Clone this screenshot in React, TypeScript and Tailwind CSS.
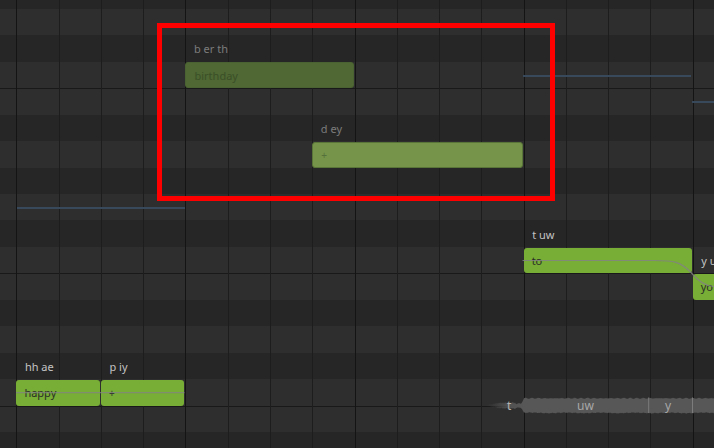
import React from "react";

const BEAT = 42.27;
const X0 = 16.4;
const ROW = 26.45;
const Y0 = -17.47;
const rowTop = (i: number) => Y0 + i * ROW;
const bx = (b: number) => X0 + b * BEAT;

type RowKind = "dark" | "light" | "lightLine";
const rows: RowKind[] = [
  "dark", "light", "dark", "light", "lightLine", "dark", "light", "dark", "light",
  "dark", "light", "lightLine", "dark", "light", "dark", "light", "lightLine", "dark",
];

type Note = {
  start: number;
  end: number;
  row: number;
  text: string;
  phon: string;
  kind: "bright" | "dim" | "mid";
};

const notes: Note[] = [
  { start: 4, end: 8, row: 3, text: "birthday", phon: "b er th", kind: "dim" },
  { start: 7, end: 12, row: 6, text: "+", phon: "d ey", kind: "mid" },
  { start: 12, end: 16, row: 10, text: "to", phon: "t uw", kind: "bright" },
  { start: 16, end: 20, row: 11, text: "yo", phon: "y uw", kind: "bright" },
  { start: 0, end: 2, row: 15, text: "happy", phon: "hh ae", kind: "bright" },
  { start: 2, end: 4, row: 15, text: "+", phon: "p iy", kind: "bright" },
];

function noteClass(kind: Note["kind"]) {
  if (kind === "dim") return "bg-[#4f6834] border border-[#4a6231] text-[#3b4f27]";
  if (kind === "mid") return "bg-[#76944a] border-[1.5px] border-[#5a7538] text-[#55703a]";
  return "bg-[#78ad36] text-[#2a2e26]";
}
function phonClass(kind: Note["kind"]) {
  if (kind === "bright") return "text-[#c4c4c4]";
  return "text-[#7c7c7c]";
}

function buildWave() {
  const cy = 405.6;
  const top: string[] = [];
  const bot: string[] = [];
  for (let x = 486; x <= 716; x += 1) {
    let a: number;
    if (x < 500) a = 0.5 + ((x - 486) / 14) * 2.2;
    else if (x < 516) a = 2.7 + Math.sin(x * 3.7) * 0.5;
    else if (x < 521) a = 1.9;
    else if (x < 524) a = 1.9 + ((x - 521) / 3) * 5.3;
    else a = 7.3;
    const n1 = Math.sin(x * 3.1) * 0.35 + Math.sin(x * 7.3 + 1.3) * 0.3 + Math.sin(x * 0.9) * 0.25;
    const n2 = Math.sin(x * 2.7 + 2.1) * 0.35 + Math.cos(x * 6.1) * 0.3 + Math.sin(x * 1.1 + 0.4) * 0.25;
    top.push(`${x.toFixed(1)},${(cy - a - n1).toFixed(2)}`);
    bot.unshift(`${x.toFixed(1)},${(cy + a + n2).toFixed(2)}`);
  }
  return "M" + top.join(" L") + " L" + bot.join(" L") + " Z";
}
const wavePath = buildWave();

function KeyRows() {
  return (
    <div className="flex flex-col mt-[-17.47px]">
      {rows.map((r, i) => (
        <div
          key={i}
          className={
            r === "dark"
              ? "h-[26.45px] shrink-0 bg-[#262626]"
              : r === "light"
              ? "h-[26.45px] shrink-0 bg-[#2e2e2e]"
              : "h-[26.45px] shrink-0 bg-[#2e2e2e] border-t border-[#191919]"
          }
        />
      ))}
    </div>
  );
}

function BeatLines() {
  return (
    <div className="absolute inset-0 flex pl-[16.4px]">
      {Array.from({ length: 18 }).map((_, i) => (
        <div
          key={i}
          className={
            i % 4 === 0
              ? "w-[42.27px] h-full shrink-0 border-l border-[#141414]"
              : "w-[42.27px] h-full shrink-0 border-l border-[#1d1d1d]"
          }
        />
      ))}
    </div>
  );
}

export default function App() {
  return (
    <div className="relative w-[714px] h-[448px] overflow-hidden bg-[#262626] font-['Noto_Sans',sans-serif]">
      <KeyRows />
      <BeatLines />

      {/* ghost (previous part) lines */}
      <div className="absolute left-[17px] top-[206.5px] w-[168px] h-[2px] bg-[#37495a]" />
      <div className="absolute left-[523px] top-[75.3px] w-[168px] h-[2px] bg-[#37495a]" />
      <div className="absolute left-[692px] top-[101px] w-[30px] h-[2px] bg-[#37495a]" />

      {/* phoneme labels */}
      {notes.map((n, i) => (
        <div
          key={"p" + i}
          className={"absolute flex items-center pt-[2px] pl-[8.5px] text-[11px] whitespace-nowrap " + phonClass(n.kind)}
          style={{ left: bx(n.start), top: rowTop(n.row - 1), height: ROW }}
        >
          {n.phon}
        </div>
      ))}

      {/* pitch curves behind note text */}
      <svg className="absolute inset-0 pointer-events-none" width={714} height={448} viewBox="0 0 714 448">
        <defs>
          <linearGradient id="wfade" x1="486" y1="0" x2="524" y2="0" gradientUnits="userSpaceOnUse">
            <stop offset="0" stopColor="#4f4f4f" stopOpacity="0" />
            <stop offset="0.6" stopColor="#555555" stopOpacity="0.9" />
            <stop offset="1" stopColor="#575757" stopOpacity="1" />
          </linearGradient>
        </defs>
        <path d={wavePath} fill="url(#wfade)" />
        <line x1="648.7" y1="397.5" x2="648.7" y2="413" stroke="#7c7c7c" strokeWidth={1} />
        <line x1="692.5" y1="397.5" x2="692.5" y2="413" stroke="#7c7c7c" strokeWidth={1} />
      </svg>

      {/* notes */}
      {notes.map((n, i) => (
        <div
          key={"n" + i}
          className={"absolute flex items-center pl-[8px] rounded-[3px] text-[11px] whitespace-nowrap overflow-hidden " + noteClass(n.kind)}
          style={{
            left: bx(n.start),
            top: rowTop(n.row) + 0.5,
            width: bx(n.end) - bx(n.start) - 1,
            height: ROW - 0.5,
          }}
        >
          <span className={n.text === "+" ? "pt-[1px] text-[10px]" : "pt-[1px]"}>{n.text}</span>
        </div>
      ))}

      <svg className="absolute inset-0 pointer-events-none" width={714} height={448} viewBox="0 0 714 448">
        <path d="M16 392.6 L184.5 392.6" stroke="#838383" strokeOpacity={0.75} strokeWidth={1.2} fill="none" />
        <path
          d="M522.5 260.5 L655 260.5 C674 260.5 680 262 690 271.5 C697 279 703 286.3 716 286.6"
          stroke="#838383"
          strokeOpacity={0.85}
          strokeWidth={1.2}
          fill="none"
        />
      </svg>

      {/* waveform labels */}
      <div className="absolute left-[507px] top-[398px] h-[16px] flex items-center text-[12px] text-[#b4b4b4]">t</div>
      <div className="absolute left-[577px] top-[398px] h-[16px] flex items-center text-[12px] text-[#a8a8a8]">uw</div>
      <div className="absolute left-[665px] top-[398px] h-[16px] flex items-center text-[12px] text-[#a8a8a8]">y</div>

      {/* red annotation box */}
      <div className="absolute left-[157px] top-[23px] w-[398px] h-[178px] border-[5px] border-[#ff0000]" />
    </div>
  );
}
